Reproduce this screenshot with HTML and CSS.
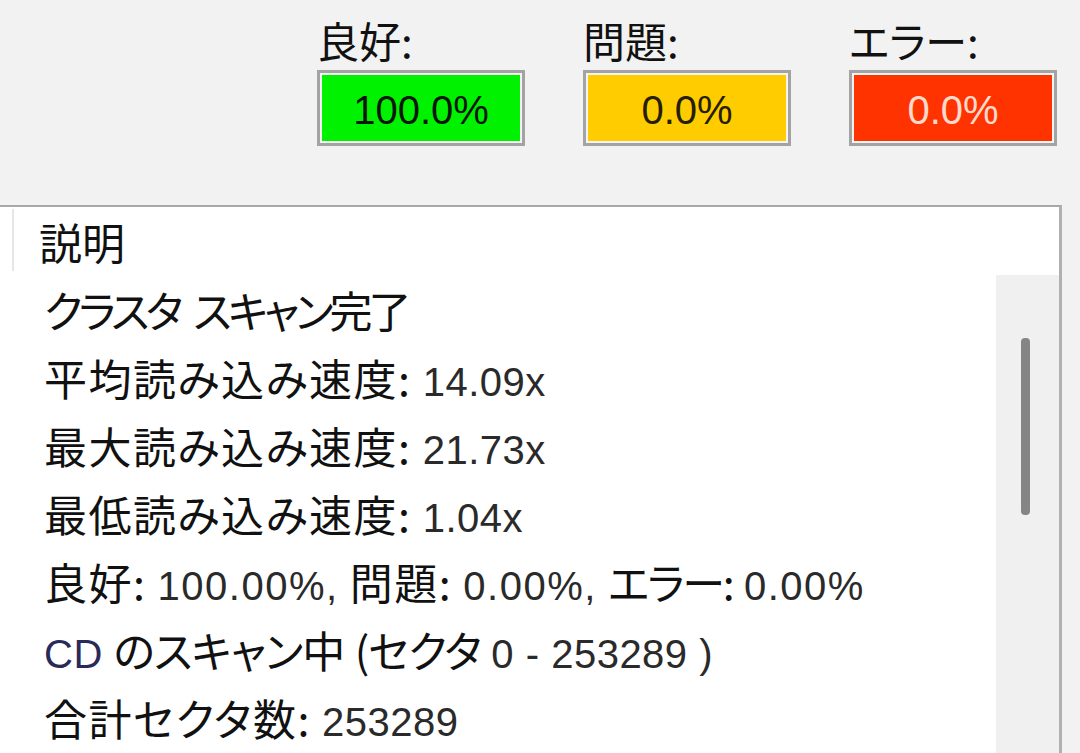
FILE: index.html
```html
<!DOCTYPE html>
<html lang="ja">
<head>
<meta charset="utf-8">
<title>スキャン結果</title>
<link rel="stylesheet" href="styles.css">
</head>
<body>
<div class="top">
  <div class="stat">
    <div class="stat-label">良好:</div>
    <div class="stat-box good">100.0%</div>
  </div>
  <div class="stat">
    <div class="stat-label">問題:</div>
    <div class="stat-box warn">0.0%</div>
  </div>
  <div class="stat">
    <div class="stat-label">エラー:</div>
    <div class="stat-box err">0.0%</div>
  </div>
</div>
<div class="panel">
  <div class="header">
    <div class="header-sep"></div>
    <div class="header-text">説明</div>
  </div>
  <div class="body">
    <div class="list">
      <div class="row row-tight">クラスタ<span class="gap"></span>スキャン完了</div>
      <div class="row">平均読み込み速度: <span class="num">14.09x</span></div>
      <div class="row">最大読み込み速度: <span class="num">21.73x</span></div>
      <div class="row">最低読み込み速度: <span class="num">1.04x</span></div>
      <div class="row">良好: <span class="num pct">100.00%,</span> 問題: <span class="num pct">0.00%,</span> <span class="kana-narrow">エラー:</span> <span class="num pct">0.00%</span></div>
      <div class="row row-plain"><span class="num blue">CD</span> のスキャン中 (セクタ <span class="num">0 - 253289 )</span></div>
      <div class="row">合計セクタ数: <span class="num">253289</span></div>
    </div>
    <div class="scrollbar">
      <div class="thumb"></div>
    </div>
  </div>
</div>
</body>
</html>
```

FILE: styles.css
```css
html, body {
  margin: 0;
  padding: 0;
}
body {
  width: 1080px;
  height: 753px;
  overflow: hidden;
  background: #f2f2f2;
  font-family: "Noto Sans CJK JP", "Noto Sans", sans-serif;
  font-feature-settings: "palt";
  color: #111;
}
.top {
  height: 205px;
  display: flex;
  gap: 58px;
  padding-left: 317px;
  box-sizing: border-box;
}
.stat {
  display: flex;
  flex-direction: column;
}
.stat-label {
  font-size: 42px;
  line-height: 46px;
  height: 46px;
  margin-top: 17px;
  margin-bottom: 7px;
  color: #111;
}
.stat-box {
  width: 202px;
  height: 70px;
  border: 3px solid #a3a3a3;
  box-shadow: inset 0 0 0 2px #f4f4f4;
  font-family: "Liberation Sans", "Noto Sans", sans-serif;
  font-size: 40px;
  line-height: 74px;
  text-align: center;
}
.good { background: #00f200; color: #0a160a; }
.warn { background: #ffcc00; color: #261e00; }
.err { background: #ff3300; color: #ffd9cc; }

.panel {
  width: 1059px;
  height: 548px;
  background: #fff;
  border-top: 2px solid #a8a8a8;
  border-right: 3px solid #b0b0b0;
  display: flex;
  flex-direction: column;
}
.header {
  height: 68px;
  display: flex;
  align-items: center;
  flex-shrink: 0;
}
.header-sep {
  width: 2px;
  height: 62px;
  margin-left: 12px;
  background: #e6e6e6;
  align-self: flex-start;
  margin-top: 2px;
}
.header-text {
  margin-left: 25px;
  font-size: 43px;
  line-height: 46px;
  color: #111;
}
.body {
  flex: 1;
  display: flex;
}
.list {
  flex: 1;
  padding-left: 44px;
}
.row {
  height: 68px;
  line-height: 68px;
  font-size: 43px;
  letter-spacing: 1.5px;
  white-space: nowrap;
  color: #111;
}
.row-tight {
  letter-spacing: -4px;
}
.gap {
  display: inline-block;
  width: 14px;
}
.row-plain {
  letter-spacing: -1px;
  word-spacing: 2px;
}
.kana-narrow {
  letter-spacing: -2px;
}
.num {
  font-family: "Liberation Sans", "Noto Sans", sans-serif;
  font-size: 40px;
  letter-spacing: 0.5px;
  word-spacing: 0;
  color: #2a2a2a;
}
.pct {
  letter-spacing: 1.5px;
}
.blue { color: #2a2a5a; }
.scrollbar {
  width: 63px;
  background: #f0f0f0;
  position: relative;
}
.thumb {
  position: absolute;
  left: 25px;
  top: 63px;
  width: 9px;
  height: 177px;
  background: #858585;
  border-radius: 4px;
}
```
